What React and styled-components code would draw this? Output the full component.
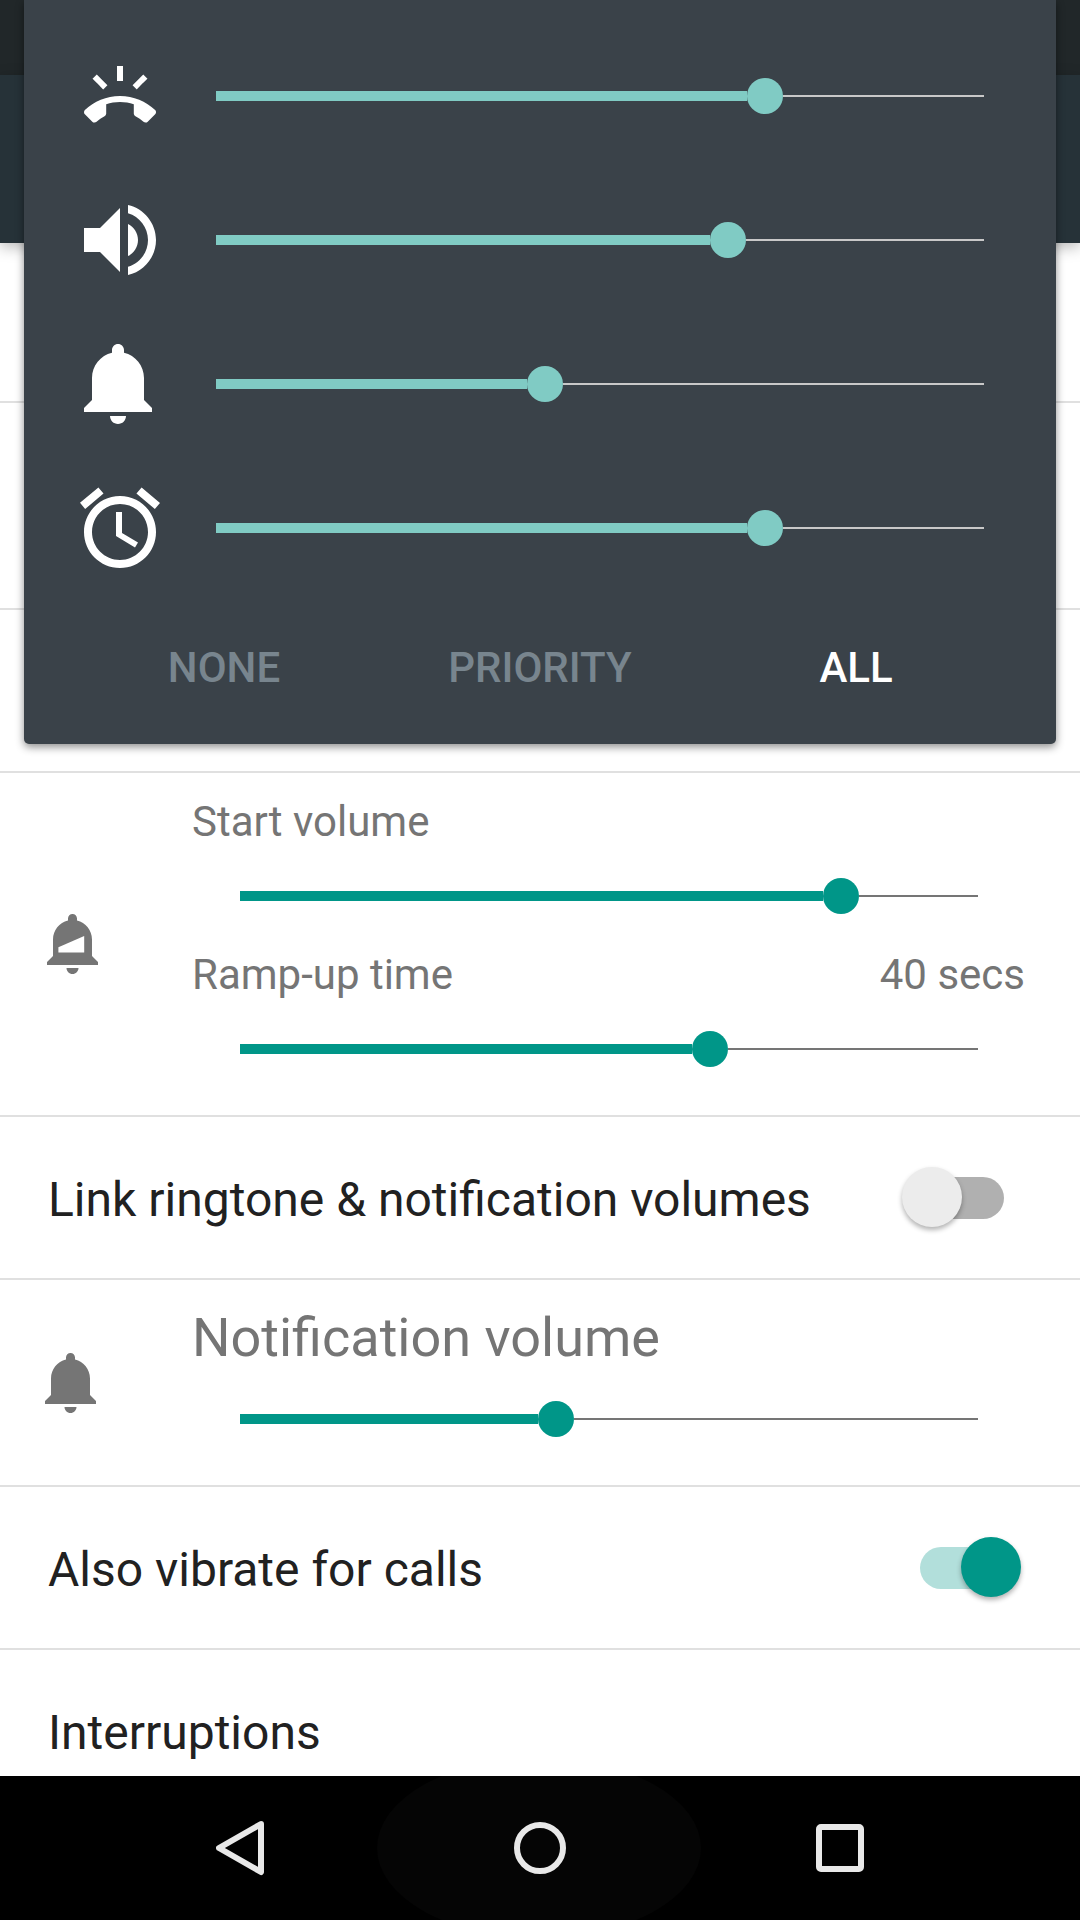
import React from "react";
import styled, { createGlobalStyle } from "styled-components";

const GlobalStyle = createGlobalStyle`
  html, body {
    margin: 0;
    padding: 0;
    background: #fff;
    font-family: Roboto, "Liberation Sans", sans-serif;
  }
  * {
    box-sizing: border-box;
  }
`;

const RING_PATH =
  "M23.71 16.67C20.66 13.78 16.54 12 12 12 7.46 12 3.34 13.78.29 16.67c-.18.18-.29.43-.29.71 0 .28.11.53.29.71l2.48 2.48c.18.18.43.29.71.29.27 0 .52-.11.7-.28.79-.74 1.69-1.36 2.66-1.85.33-.16.56-.5.56-.9v-3.1c1.45-.48 3-.73 4.6-.73s3.15.25 4.6.72v3.1c0 .39.23.74.56.9.98.49 1.87 1.12 2.67 1.85.18.18.43.28.7.28.28 0 .53-.11.71-.29l2.48-2.48c.18-.18.29-.43.29-.71 0-.27-.11-.52-.29-.7zM21.16 6.26l-1.41-1.41-3.56 3.55 1.41 1.41s3.45-3.52 3.56-3.55zM13 2h-2v5h2V2zM6.4 9.81L7.81 8.4 4.26 4.84 2.84 6.26c.11.03 3.56 3.55 3.56 3.55z";
const SPEAKER_PATH =
  "M3 9v6h4l5 5V4L7 9H3zm13.5 3c0-1.77-1.02-3.29-2.5-4.03v8.05c1.48-.73 2.5-2.25 2.5-4.02zM14 3.23v2.06c2.89.86 5 3.54 5 6.71s-2.11 5.85-5 6.71v2.06c4.01-.91 7-4.49 7-8.77s-2.99-7.86-7-8.77z";
const BELL_PATH =
  "M11.5 22c1.1 0 2-.9 2-2h-4c0 1.1.9 2 2 2zm6.5-6v-5.5c0-3.07-2.13-5.64-5-6.32V3.5c0-.83-.67-1.5-1.5-1.5S10 2.67 10 3.5v.68c-2.87.68-5 3.25-5 6.32V16l-2 2v1h17v-1l-2-2z";
const ALARM_PATH =
  "M22 5.72l-4.6-3.86-1.29 1.53 4.6 3.86L22 5.72zM7.88 3.39L6.6 1.86 2 5.71l1.29 1.53 4.59-3.85zM12.5 8H11v6l4.75 2.85.75-1.23-4-2.37V8zM12 4c-4.97 0-9 4.03-9 9s4.03 9 9 9c4.97 0 9-4.03 9-9s-4.03-9-9-9zm0 16c-3.87 0-7-3.13-7-7s3.13-7 7-7 7 3.13 7 7-3.13 7-7 7z";

const Screen = styled.div`
  position: relative;
  width: 1080px;
  height: 1920px;
  overflow: hidden;
  display: flex;
  flex-direction: column;
  background: #fff;
`;

const StatusBar = styled.div`
  height: 75px;
  background: #212729;
`;

const AppBar = styled.div`
  height: 168px;
  background: #263238;
  box-shadow: 0 4px 14px rgba(0, 0, 0, 0.28);
`;

const SettingsList = styled.div`
  flex: 1;
  min-height: 0;
  overflow: hidden;
  display: flex;
  flex-direction: column;
`;

const Row = styled.div`
  flex: none;
  height: ${(p) => p.$height}px;
  border-bottom: 2px solid #e0e0e0;
  display: flex;
  align-items: center;
`;

const ToggleRow = styled(Row)`
  justify-content: space-between;
  padding: 0 76px 0 48px;
`;

const Title = styled.span`
  margin-top: 4px;
  font-size: 48px;
  color: #212121;
`;

const IconCell = styled.div`
  width: 192px;
  flex: none;
  padding-left: ${(p) => p.$left}px;
  display: flex;
`;

const VolumeColumn = styled.div`
  width: 833px;
  padding-top: ${(p) => p.$top}px;
  align-self: flex-start;
`;

const LabelLine = styled.div`
  display: flex;
  justify-content: space-between;
  height: ${(p) => p.$height}px;
  margin-top: ${(p) => p.$gap || 0}px;
  line-height: ${(p) => p.$height}px;
  font-size: ${(p) => p.$size}px;
  color: #757575;
`;

const SliderWrap = styled.div`
  width: ${(p) => p.$width}px;
  height: 36px;
  margin: ${(p) => p.$margin};
  display: flex;
  align-items: center;
`;

const Fill = styled.div`
  height: 10px;
  flex: none;
  background: ${(p) => p.$color};
`;

const Thumb = styled.div`
  width: 36px;
  height: 36px;
  flex: none;
  border-radius: 50%;
  background: ${(p) => p.$color};
`;

const Rest = styled.div`
  flex: 1;
  height: 2px;
  background: ${(p) => p.$color};
`;

const Slider = ({ width, at, color, rest, margin = "0" }) => (
  <SliderWrap $width={width} $margin={margin}>
    <Fill $color={color} style={{ width: at - 18 }} />
    <Thumb $color={color} />
    <Rest $color={rest} />
  </SliderWrap>
);

const Switch = styled.div`
  position: relative;
  width: 84px;
  height: 42px;
  border-radius: 21px;
  background: ${(p) => (p.$on ? "#b2dfdb" : "#b0b0b0")};
`;

const Knob = styled.div`
  position: absolute;
  top: -10px;
  width: 60px;
  height: 60px;
  border-radius: 50%;
  left: ${(p) => (p.$on ? "41px" : "-18px")};
  background: ${(p) => (p.$on ? "#009688" : "#ececec")};
  box-shadow: 0 3px 5px rgba(0, 0, 0, 0.3);
`;

const NavBar = styled.div`
  position: relative;
  flex: none;
  height: 144px;
  padding: 0 90px;
  background: #000;
  overflow: hidden;
  display: grid;
  grid-template-columns: repeat(3, 300px);
  justify-items: center;
  align-items: center;
`;

const NavGlow = styled.div`
  position: absolute;
  left: 377px;
  top: -18px;
  width: 324px;
  height: 180px;
  border-radius: 50%;
  background: #050505;
`;

const NavIcon = styled.svg`
  position: relative;
  fill: none;
  stroke: #e8e8e8;
  stroke-width: 6;
  stroke-linejoin: round;
`;

const VolumePanel = styled.div`
  position: absolute;
  top: 0;
  left: 24px;
  width: 1032px;
  height: 744px;
  padding: 24px 72px 0 60px;
  background: #3a4249;
  border-radius: 0 0 5px 5px;
  box-shadow: 0 3px 9px rgba(0, 0, 0, 0.45);
`;

const StreamRow = styled.div`
  height: 144px;
  display: flex;
  align-items: center;
  gap: 60px;
`;

const IconSlot = styled.div`
  width: 72px;
  height: 96px;
  flex: none;
  display: flex;
  align-items: center;
  justify-content: center;
`;

const Glyph = styled.svg`
  flex: none;
  width: ${(p) => p.$size}px;
  height: ${(p) => p.$size}px;
  fill: ${(p) => p.$color};
`;

const Modes = styled.div`
  margin: 0 -30px 0 -18px;
  height: 134px;
  display: grid;
  grid-template-columns: repeat(3, 316px);
  align-items: center;
  justify-items: center;
`;

const Mode = styled.span`
  font-size: 42px;
  font-weight: 500;
  color: ${(p) => (p.$active ? "#fff" : "#78858e")};
`;

const streams = [
  { path: RING_PATH, size: 72, at: 549 },
  { path: SPEAKER_PATH, size: 96, at: 512 },
  { path: BELL_PATH, size: 96, at: 329 },
  { path: ALARM_PATH, size: 96, at: 549 },
];

const GreyBell = ({ wedge }) => (
  <Glyph $size={72} $color="#757575" viewBox="0 0 24 24">
    <path d={BELL_PATH} />
    {wedge && <polygon points="6.8,13.1 15.4,9.3 15.4,14.8 6.8,14.8" fill="#fff" />}
  </Glyph>
);

export default function App() {
  return (
    <Screen>
      <GlobalStyle />
      <StatusBar />
      <AppBar />
      <SettingsList>
        <Row $height={160} />
        <Row $height={207} />
        <Row $height={163} />
        <Row $height={344}>
          <IconCell $left={38}>
            <GreyBell wedge />
          </IconCell>
          <VolumeColumn $top={21}>
            <LabelLine $height={56} $size={42}>
              Start volume
            </LabelLine>
            <Slider width={738} at={601} color="#009688" rest="#757575" margin="28px 0 0 48px" />
            <LabelLine $height={56} $size={42} $gap={33}>
              <span>Ramp-up time</span>
              <span>40 secs</span>
            </LabelLine>
            <Slider width={738} at={470} color="#009688" rest="#757575" margin="28px 0 0 48px" />
          </VolumeColumn>
        </Row>
        <ToggleRow $height={163}>
          <Title>Link ringtone &amp; notification volumes</Title>
          <Switch>
            <Knob />
          </Switch>
        </ToggleRow>
        <Row $height={207}>
          <IconCell $left={36}>
            <GreyBell />
          </IconCell>
          <VolumeColumn $top={24}>
            <LabelLine $height={68} $size={54}>
              Notification volume
            </LabelLine>
            <Slider width={738} at={316} color="#009688" rest="#757575" margin="29px 0 0 48px" />
          </VolumeColumn>
        </Row>
        <ToggleRow $height={163}>
          <Title>Also vibrate for calls</Title>
          <Switch $on>
            <Knob $on />
          </Switch>
        </ToggleRow>
        <ToggleRow $height={163}>
          <Title>Interruptions</Title>
        </ToggleRow>
      </SettingsList>
      <NavBar>
        <NavGlow />
        <NavIcon width="48" height="56" viewBox="0 0 48 56">
          <path d="M45 4 L3 28 L45 52 Z" />
        </NavIcon>
        <NavIcon width="52" height="52" viewBox="0 0 52 52">
          <circle cx="26" cy="26" r="23" />
        </NavIcon>
        <NavIcon width="48" height="48" viewBox="0 0 48 48">
          <rect x="3" y="3" width="42" height="42" rx="2" />
        </NavIcon>
      </NavBar>
      <VolumePanel>
        {streams.map((s) => (
          <StreamRow key={s.path}>
            <IconSlot>
              <Glyph $size={s.size} $color="#fff" viewBox="0 0 24 24">
                <path d={s.path} />
              </Glyph>
            </IconSlot>
            <Slider width={768} at={s.at} color="#80cbc4" rest="#c8c8c8" />
          </StreamRow>
        ))}
        <Modes>
          <Mode>NONE</Mode>
          <Mode>PRIORITY</Mode>
          <Mode $active>ALL</Mode>
        </Modes>
      </VolumePanel>
    </Screen>
  );
}
